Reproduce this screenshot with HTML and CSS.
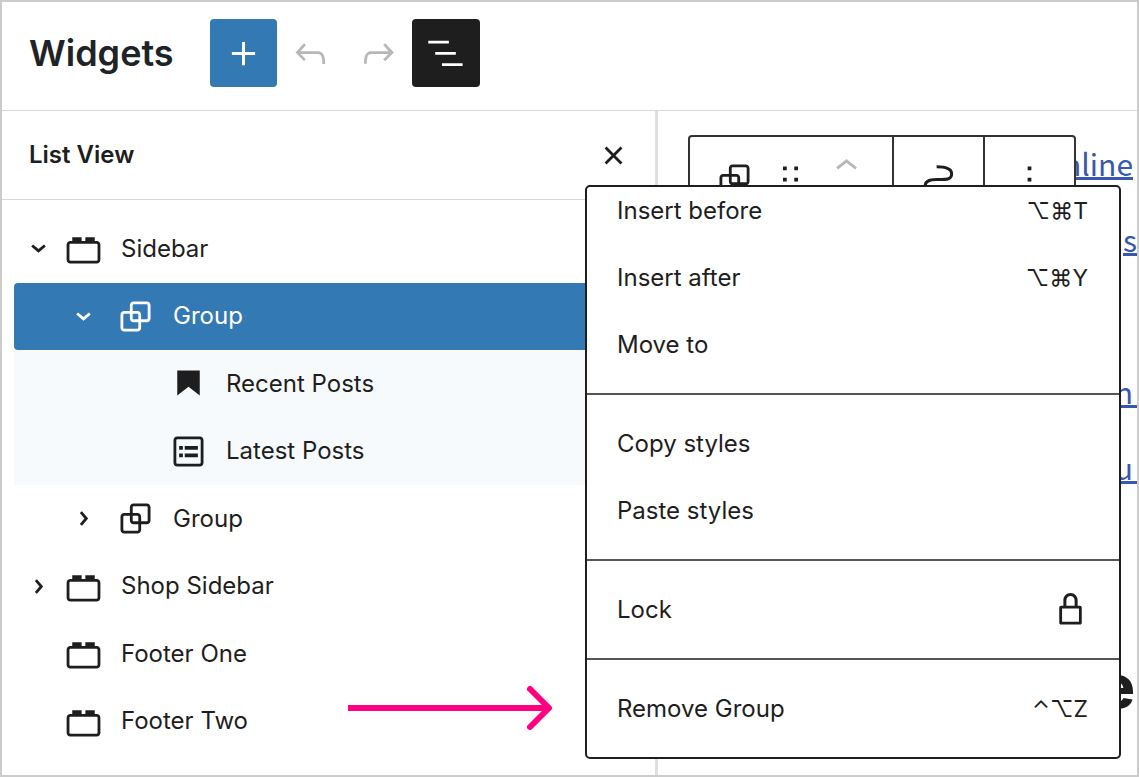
FILE: index.html
```html
<!DOCTYPE html>
<html lang="en">
<head>
<meta charset="utf-8">
<title>Widgets</title>
<link rel="stylesheet" href="styles.css">
</head>
<body>
<svg class="sprite" aria-hidden="true">
  <symbol id="area" viewBox="0 0 24 24"><path d="M19 8h-1V6h-5v2h-2V6H6v2H5c-1.1 0-2 .9-2 2v8c0 1.1.9 2 2 2h14c1.1 0 2-.9 2-2v-8c0-1.1-.9-2-2-2zm.5 10c0 .3-.2.5-.5.5H5c-.3 0-.5-.2-.5-.5v-8c0-.3.2-.5.5-.5h14c.3 0 .5.2.5.5v8z"/></symbol>
  <symbol id="group" viewBox="0 0 24 24"><path d="M18 4h-7c-1.1 0-2 .9-2 2v3H6c-1.1 0-2 .9-2 2v7c0 1.1.9 2 2 2h7c1.1 0 2-.9 2-2v-3h3c1.1 0 2-.9 2-2V6c0-1.1-.9-2-2-2zm-4.5 14c0 .3-.2.5-.5.5H6c-.3 0-.5-.2-.5-.5v-7c0-.3.2-.5.5-.5h3V13c0 1.1.9 2 2 2h2.5v3zm0-4.500H11c-.3 0-.5-.2-.5-.5v-2.500H13c.3 0 .5.2.5.5v2.500zm5-.5c0 .3-.2.5-.5.5h-3V11c0-1.100-.9-2-2-2h-2.500V6c0-.3.2-.5.5-.5h7c.3 0 .5.2.5.5v7z"/></symbol>
  <symbol id="chevron-down" viewBox="0 0 24 24"><path d="M8.600 10.400L12 13.300l3.400-2.900" fill="none" stroke="currentColor" stroke-width="1.500"/></symbol>
  <symbol id="chevron-right" viewBox="0 0 24 24"><path d="M10.600 8.600L13.500 12l-2.900 3.400" fill="none" stroke="currentColor" stroke-width="1.500"/></symbol>
</svg>

<div class="app">
  <header class="header">
    <h1 class="header-title">Widgets</h1>
    <div class="header-tools">
      <button class="tool tool-primary" aria-label="Add block"><svg class="icon" viewBox="0 0 24 24"><path d="M18.200 11.200h-5.400V5.800h-1.600v5.400H5.800v1.600h5.400v5.400h1.600v-5.400h5.400z"/></svg></button>
      <button class="tool" disabled aria-label="Undo"><svg class="icon" viewBox="0 0 24 24"><path d="M18.300 11.700c-.6-.6-1.400-.9-2.300-.9H6.700l2.900-3.300-1.100-1-4.500 5L8.500 16l1-1-2.700-2.700H16c.5 0 .9.2 1.300.5 1 1 1 3.400 1 4.500v.3h1.500v-.2c0-1.500 0-4.300-1.500-5.700z"/></svg></button>
      <button class="tool" disabled aria-label="Redo"><svg class="icon" viewBox="0 0 24 24"><path d="M15.600 6.500l-1.100 1 2.900 3.300H8c-.9 0-1.700.3-2.300.9-1.400 1.500-1.400 4.200-1.400 5.600v.2h1.500v-.3c0-1.100 0-3.500 1-4.500.3-.3.700-.5 1.300-.5h9.200L14.500 15l1.100 1.100 4.600-4.600-4.600-5z"/></svg></button>
      <button class="tool tool-pressed" aria-label="List View" aria-pressed="true"><svg class="icon" viewBox="0 0 24 24"><path d="M2.800 5.200h11v1.500h-11zM6.500 11.200h11v1.500h-11zM10.100 17.200h11v1.500h-11z"/></svg></button>
    </div>
  </header>

  <div class="body">
    <aside class="sidebar">
      <div class="panel-header">
        <h2 class="panel-title">List View</h2>
        <button class="close" aria-label="Close List View"><svg class="icon" viewBox="0 0 24 24"><path d="M12 13.060l3.712 3.713 1.061-1.060L13.061 12l3.712-3.712-1.060-1.060L12 10.938 8.288 7.227l-1.061 1.060L10.939 12l-3.712 3.712 1.060 1.061L12 13.061z"/></svg></button>
      </div>
      <ul class="tree">
        <li class="row"><button class="toggle" aria-label="Collapse"><svg class="icon"><use href="#chevron-down"/></svg></button><a class="block" href="#"><svg class="icon"><use href="#area"/></svg><span>Sidebar</span></a></li>
        <li class="row row-nested row-selected"><button class="toggle" aria-label="Collapse"><svg class="icon"><use href="#chevron-down"/></svg></button><a class="block" href="#"><svg class="icon"><use href="#group"/></svg><span>Group</span></a></li>
        <li class="row row-leaf row-branch"><a class="block" href="#"><svg class="icon" viewBox="0 0 24 24"><path d="M6 5h12v13.400l-6-4.700-6 4.700z"/></svg><span>Recent Posts</span></a></li>
        <li class="row row-leaf row-branch"><a class="block" href="#"><svg class="icon" viewBox="0 0 24 24"><path d="M18 4H6c-1.100 0-2 .9-2 2v12c0 1.100.9 2 2 2h12c1.100 0 2-.9 2-2V6c0-1.100-.9-2-2-2zm.5 14c0 .3-.2.5-.5.5H6c-.3 0-.5-.2-.5-.5V6c0-.3.2-.5.5-.5h12c.3 0 .5.2.5.5v12zM7 11h2V9H7v2zm0 4h2v-2H7v2zm3-4h7V9h-7v2zm0 4h7v-2h-7v2z"/></svg><span>Latest Posts</span></a></li>
        <li class="row row-nested"><button class="toggle" aria-label="Expand"><svg class="icon"><use href="#chevron-right"/></svg></button><a class="block" href="#"><svg class="icon"><use href="#group"/></svg><span>Group</span></a></li>
        <li class="row"><button class="toggle" aria-label="Expand"><svg class="icon"><use href="#chevron-right"/></svg></button><a class="block" href="#"><svg class="icon"><use href="#area"/></svg><span>Shop Sidebar</span></a></li>
        <li class="row row-flat"><a class="block" href="#"><svg class="icon"><use href="#area"/></svg><span>Footer One</span></a></li>
        <li class="row row-flat"><a class="block" href="#"><svg class="icon"><use href="#area"/></svg><span>Footer Two</span></a></li>
      </ul>
    </aside>

    <main class="canvas">
      <ul class="posts">
        <li class="post post-short"><a class="post-link" href="#">online</a></li>
        <li class="post post-cut"><a class="post-link" href="#">s</a></li>
        <li class="post"></li>
        <li class="post"><a class="post-link" href="#">n</a></li>
        <li class="post"><a class="post-link" href="#">u</a></li>
      </ul>
      <h2 class="canvas-title">e</h2>
    </main>
  </div>

  <div class="toolbar" role="toolbar" aria-label="Block tools">
    <div class="toolbar-group toolbar-block">
      <button class="toolbar-button" aria-label="Group"><svg class="icon"><use href="#group"/></svg></button>
      <button class="toolbar-button toolbar-drag" aria-label="Drag"><svg class="icon" viewBox="0 0 24 24"><path d="M8 5h2v2H8zM14 5h2v2h-2zM8 11h2v2H8zM14 11h2v2h-2zM8 17h2v2H8zM14 17h2v2h-2z"/></svg></button>
      <button class="toolbar-button toolbar-mover" disabled aria-label="Move up"><svg class="icon" viewBox="0 0 24 24"><path d="M6.500 12.400L12 8l5.500 4.400-.9 1.200L12 10l-4.500 3.600z"/></svg></button>
    </div>
    <div class="toolbar-group">
      <button class="toolbar-button" aria-label="Move to widget area"><svg class="icon" viewBox="0 0 24 24"><path d="M11 5.250c4.500 0 8 1 8 3.800 0 3.600-4.500 2.900-8.200 2.900-3.500 0-5.900.8-5.900 3.300" fill="none" stroke="currentColor" stroke-width="1.600"/></svg></button>
    </div>
    <div class="toolbar-group">
      <button class="toolbar-button" aria-label="Options"><svg class="icon" viewBox="0 0 24 24"><path d="M11 5h2v2h-2zM11 11h2v2h-2zM11 17h2v2h-2z"/></svg></button>
    </div>
  </div>

  <div class="menu" role="menu">
    <div class="menu-group">
      <button class="menu-item" role="menuitem"><span>Insert before</span><kbd class="shortcut">⌥⌘T</kbd></button>
      <button class="menu-item" role="menuitem"><span>Insert after</span><kbd class="shortcut">⌥⌘Y</kbd></button>
      <button class="menu-item" role="menuitem"><span>Move to</span></button>
    </div>
    <div class="menu-group">
      <button class="menu-item" role="menuitem"><span>Copy styles</span></button>
      <button class="menu-item" role="menuitem"><span>Paste styles</span></button>
    </div>
    <div class="menu-group">
      <button class="menu-item menu-item-icon" role="menuitem"><span>Lock</span><svg class="icon" viewBox="0 0 24 24"><path d="M17 10h-1.200V7c0-2.100-1.700-3.800-3.800-3.800S8.200 4.900 8.200 7v3H7c-.6 0-1 .4-1 1v8c0 .6.4 1 1 1h10c.6 0 1-.4 1-1v-8c0-.6-.4-1-1-1zM9.800 7c0-1.200 1-2.200 2.200-2.200s2.200 1 2.200 2.200v3H9.800V7zm6.700 11.500h-9v-7h9v7z"/></svg></button>
    </div>
    <div class="menu-group">
      <button class="menu-item" role="menuitem"><span>Remove Group</span><kbd class="shortcut">⌃⌥Z</kbd></button>
    </div>
  </div>

  <svg class="pointer" viewBox="0 0 206 48" aria-hidden="true"><path d="M0 24h200" stroke-width="6"/><path d="M182 5l19 19-19 19" stroke-width="6" stroke-linecap="round" stroke-linejoin="round"/></svg>
</div>
</body>
</html>
```
FILE: styles.css
```css
* {
  box-sizing: border-box;
}

body {
  margin: 0;
  font-family: Inter, "Liberation Sans", sans-serif;
  font-size: 24px;
  line-height: 32px;
  color: #1e1e1e;
  background: #fff;
}

button {
  margin: 0;
  padding: 0;
  border: 0;
  background: none;
  color: inherit;
  font: inherit;
}

ul {
  margin: 0;
  padding: 0;
  list-style: none;
}

.sprite {
  position: absolute;
  width: 0;
  height: 0;
}

.icon {
  display: block;
  flex: none;
  width: 45px;
  height: 45px;
  fill: currentColor;
}

.app {
  position: relative;
  display: flex;
  flex-direction: column;
  min-height: 100vh;
  overflow: hidden;
  border: 2px solid #ccc;
}

.header {
  display: flex;
  align-items: center;
  gap: 36px;
  padding: 17px 28px 23px 27px;
  border-bottom: 1px solid #d8d8d8;
}

.header-title {
  margin: 0;
  font-size: 36px;
  line-height: 48px;
  font-weight: 600;
  color: #1d2327;
}

.header-tools {
  display: grid;
  grid-template-columns: repeat(4, 1fr);
  width: 270px;
}

.tool {
  display: flex;
  align-items: center;
  justify-content: center;
  height: 68px;
  border-radius: 4px;
}

.tool:disabled {
  color: #b8b8b8;
}

.tool-primary {
  background: #337ab5;
  color: #fff;
}

.tool-pressed {
  background: #1e1e1e;
  color: #fff;
}

.body {
  display: flex;
  flex: 1;
}

.sidebar {
  flex: none;
  width: 656px;
  border-right: 3px solid #e0e0e0;
}

.panel-header {
  display: flex;
  align-items: center;
  justify-content: space-between;
  height: 89px;
  padding: 0 19px 0 27px;
  border-bottom: 1px solid #d8d8d8;
}

.panel-title {
  margin: 0;
  font-size: 24px;
  line-height: 32px;
  font-weight: 600;
}

.tree {
  display: grid;
  grid-template-rows: repeat(8, 1fr);
  height: 540px;
  margin-top: 15px;
  padding-left: 12px;
}

.row {
  display: flex;
  align-items: center;
  padding-left: 2px;
}

.row-flat {
  padding-left: 47px;
}

.row-nested {
  gap: 7px;
  padding-left: 47px;
}

.row-leaf {
  padding-left: 152px;
}

.row-branch {
  background: #f6fafd;
}

.row-selected {
  border-radius: 4px;
  background: #337ab5;
  color: #fff;
}

.block {
  display: flex;
  align-items: center;
  gap: 15px;
  color: inherit;
  text-decoration: none;
}

.canvas {
  display: flex;
  flex: 1;
  flex-direction: column;
  justify-content: space-between;
  overflow: hidden;
  text-align: right;
}

.posts {
  padding-top: 14px;
}

.post {
  height: 76px;
  font-family: "Noto Sans CJK SC", "Open Sans", sans-serif;
  font-size: 30px;
  line-height: 76px;
}

.post-link {
  padding-right: 4px;
  color: #3858b0;
  text-decoration: none;
  background: linear-gradient(#3858b0, #3858b0) 0 36px / 100% 3px no-repeat;
}

.post-short {
  padding-right: 4px;
}

.post-short .post-link,
.post-cut .post-link {
  padding-right: 0;
}

.canvas-title {
  margin: 0;
  padding: 0 2px 49px 0;
  font-size: 60px;
  line-height: 80px;
  font-weight: 800;
}

.toolbar {
  position: absolute;
  top: 133px;
  left: 686px;
  display: flex;
  height: 88px;
  border: 2px solid #333;
  border-radius: 4px;
  background: #fff;
}

.toolbar-group {
  display: flex;
  align-items: center;
  justify-content: center;
  width: 91px;
}

.toolbar-group + .toolbar-group {
  border-left: 2px solid #333;
}

.toolbar-block {
  justify-content: flex-start;
  width: 202px;
  padding-left: 22px;
}

.toolbar-drag {
  margin-left: 11px;
}

.toolbar-mover {
  align-self: flex-start;
  margin: 7px 0 0 11px;
}

.toolbar-button:disabled {
  color: #b8b8b8;
}

.menu {
  position: absolute;
  top: 183px;
  left: 583px;
  display: flex;
  flex-direction: column;
  justify-content: flex-end;
  width: 536px;
  height: 574px;
  overflow: hidden;
  border: 2px solid #1e1e1e;
  border-radius: 5px;
  background: #fff;
}

.menu-group {
  flex: none;
  padding: 15px 0;
}

.menu-group + .menu-group {
  border-top: 2px solid #555;
}

.menu-item {
  display: flex;
  align-items: center;
  justify-content: space-between;
  width: 100%;
  height: 67px;
  padding: 0 31px 0 30px;
}

.menu-item-icon {
  padding-right: 26px;
}

.shortcut {
  font-family: inherit;
  font-size: 23px;
}

.pointer {
  position: absolute;
  top: 682px;
  left: 346px;
  width: 206px;
  height: 48px;
  fill: none;
  stroke: #ff0080;
}
```
